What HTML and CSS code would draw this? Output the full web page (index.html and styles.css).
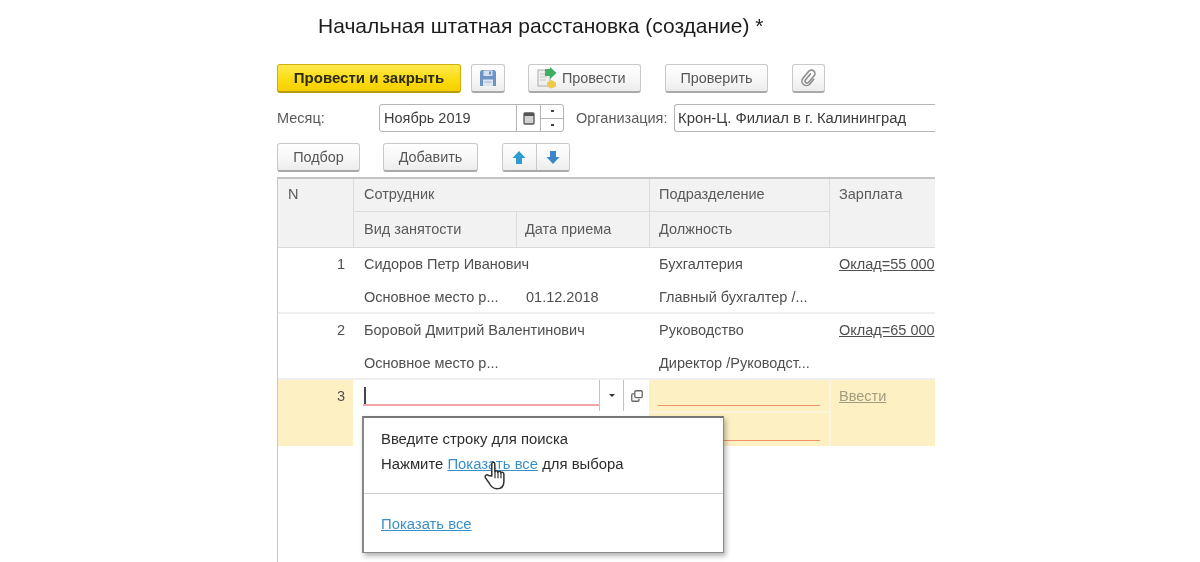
FILE: index.html
```html
<!DOCTYPE html>
<html lang="ru">
<head>
<meta charset="utf-8">
<title>Начальная штатная расстановка</title>
<link rel="stylesheet" href="styles.css">
</head>
<body>
<main class="form">
  <h1 class="title">Начальная штатная расстановка (создание) *</h1>

  <div class="bar bar-commands">
    <button class="btn btn-primary">Провести и закрыть</button>
    <button class="btn btn-save" aria-label="Записать">
      <svg width="18" height="18" viewBox="0 0 18 18"><path d="M1 2.500 2.500 1H15.500L17 2.500V17H1Z" fill="#6d94c6"/><rect x="4.500" y="1.500" width="9" height="5.500" fill="#d5e0ee"/><rect x="10" y="2.500" width="2" height="3" fill="#6d94c6"/><rect x="4" y="10.500" width="10" height="6.500" fill="#dde5f0"/><rect x="5.500" y="12.500" width="7" height="1" fill="#9db5d4"/></svg>
    </button>
    <button class="btn btn-post">
      <svg width="20" height="22" viewBox="0 0 20 22"><rect x="1" y="3" width="12" height="16" fill="#eef0ee" stroke="#a9aea9"/><path d="M3 7h7M3 10h7M3 13h6" stroke="#c2c6c2"/><path d="M8 2H13V0L19.500 6 13 12V9H8Z" fill="#3fae63"/><path d="M10 15.500 14.500 13 19 15.500V19.500L14.500 21.500 10 19.500Z" fill="#eec94c"/></svg>
      Провести
    </button>
    <button class="btn btn-check">Проверить</button>
    <button class="btn btn-clip" aria-label="Вложения">
      <svg width="18" height="18" viewBox="0 0 18 18"><path d="M7.500 5V12.500a2 2 0 0 0 4 0V4a3.500 3.500 0 0 0-7 0V13a4.500 4.500 0 0 0 9 0V7" transform="rotate(40 9 9)" fill="none" stroke="#8c8c8c" stroke-width="1.600" stroke-linecap="round"/></svg>
    </button>
  </div>

  <div class="bar bar-fields">
    <label class="field-label label-month">Месяц:</label>
    <div class="input input-month">
      <span class="input-text">Ноябрь 2019</span>
      <span class="input-cal">
        <svg width="12" height="13" viewBox="0 0 12 13"><rect x="1" y="1" width="10" height="11" rx="1" fill="#d2d2d2" stroke="#555" stroke-width="1.300"/><rect x="1" y="1" width="10" height="3" fill="#555"/></svg>
      </span>
      <span class="input-spin"><i></i><i></i></span>
    </div>
    <label class="field-label label-org">Организация:</label>
    <div class="input input-org"><span class="input-text">Крон-Ц. Филиал в г. Калининград</span></div>
  </div>

  <div class="bar bar-table">
    <button class="btn btn-pick">Подбор</button>
    <button class="btn btn-add">Добавить</button>
    <div class="btn-group">
      <button class="btn-seg" aria-label="Вверх">
        <svg width="14" height="15" viewBox="0 0 14 15"><path d="M7 1 13.500 8H10V14H4V8H.5Z" fill="#2f9bd3"/></svg>
      </button>
      <button class="btn-seg" aria-label="Вниз">
        <svg width="14" height="15" viewBox="0 0 14 15"><path d="M7 14 13.500 7H10V1H4V7H.5Z" fill="#3a86c8"/></svg>
      </button>
    </div>
  </div>

  <section class="table">
    <div class="thead">
      <div class="th th-n">N</div>
      <div class="th th-emp">Сотрудник</div>
      <div class="th th-kind">Вид занятости</div>
      <div class="th th-date">Дата приема</div>
      <div class="th th-dep">Подразделение</div>
      <div class="th th-pos">Должность</div>
      <div class="th th-sal">Зарплата</div>
    </div>

    <div class="row">
      <div class="c c-n">1</div>
      <div class="c c-emp">Сидоров Петр Иванович</div>
      <div class="c c-kind">Основное место р...</div>
      <div class="c c-date">01.12.2018</div>
      <div class="c c-dep">Бухгалтерия</div>
      <div class="c c-pos">Главный бухгалтер /...</div>
      <div class="c c-sal"><a class="sal-link">Оклад=55 000</a></div>
    </div>

    <div class="row">
      <div class="c c-n">2</div>
      <div class="c c-emp">Боровой Дмитрий Валентинович</div>
      <div class="c c-kind">Основное место р...</div>
      <div class="c c-date"></div>
      <div class="c c-dep">Руководство</div>
      <div class="c c-pos">Директор /Руководст...</div>
      <div class="c c-sal"><a class="sal-link">Оклад=65 000</a></div>
    </div>

    <div class="row row-edit">
      <div class="c c-n">3</div>
      <div class="edit-emp">
        <div class="edit-input"><span class="caret"></span></div>
        <span class="edit-drop"><i></i></span>
        <span class="edit-open">
          <svg width="12" height="12" viewBox="0 0 11 11"><rect x="3.500" y=".7" width="6.800" height="6.300" rx="1" fill="none" stroke="#666" stroke-width="1.200"/><path d="M3 3.500H1.500A.8.8 0 0 0 .7 4.300V9.500A.8.8 0 0 0 1.500 10.300H6.500A.8.8 0 0 0 7.300 9.500V8" fill="none" stroke="#666" stroke-width="1.200"/></svg>
        </span>
      </div>
      <div class="edit-dep"><span class="req"></span></div>
      <div class="edit-pos"><span class="req"></span></div>
      <div class="edit-sal"><a class="sal-link sal-muted">Ввести</a></div>
    </div>

    <aside class="popup">
      <div class="popup-msg">
        <p>Введите строку для поиска</p>
        <p>Нажмите <a class="link">Показать все</a> для выбора</p>
      </div>
      <div class="popup-foot"><a class="link">Показать все</a></div>
      <svg class="hand" width="24" height="30" viewBox="0 0 22 28"><path d="M8 15V3.500C8 1.500 10.800 1.500 10.800 3.500V11C11 9.500 13.500 9.500 13.700 11.500 14 10 16.300 10 16.500 12 17 11 19.300 11 19.300 13.500V20C19.300 24 17 26.800 12.800 26.800 8.500 26.800 7 24.500 5.500 21.500L2 16.500C1 14.500 3.500 13 5 14.500Z" fill="#fff" stroke="#333" stroke-width="1.400" stroke-linejoin="round"/><path d="M11 11V17M13.800 11.500V17M16.600 12V17" stroke="#333" stroke-width="1.100"/></svg>
    </aside>
  </section>
</main>
</body>
</html>
```

FILE: styles.css
```css
* { box-sizing: border-box; }
html, body { margin: 0; height: 562px; overflow: hidden; background: #fff; }
body {
  font-family: "Liberation Sans", Arial, sans-serif;
  font-size: 14.5px;
  color: #4f4f4f;
  filter: blur(0.45px);
}
.form {
  width: 658px;
  height: 562px;
  margin-left: 277px;
  display: flex;
  flex-direction: column;
  overflow: hidden;
}
.title {
  margin: 0;
  padding: 14px 0 0 41px;
  height: 63px;
  font-size: 21px;
  line-height: 24px;
  font-weight: 400;
  color: #1c1c1c;
  white-space: nowrap;
}
.bar { display: flex; align-items: center; flex: none; }
.bar-commands { height: 30px; }
.bar-fields { height: 28px; margin-top: 11px; }
.bar-table { height: 29px; margin-top: 11px; }

.btn {
  height: 29px;
  display: flex;
  align-items: center;
  justify-content: center;
  padding: 0;
  font: inherit;
  font-size: 14.4px;
  color: #565656;
  background: linear-gradient(#fff, #f6f6f6 60%, #ececec);
  border: 1px solid #c9c9c9;
  border-bottom: 2px solid #a9a9a9;
  border-radius: 3px;
}
.btn-primary {
  width: 184px;
  font-weight: 700;
  font-size: 15px;
  color: #2c2a10;
  background: linear-gradient(#ffe94f, #fbdc12 55%, #f6cf00);
  border-color: #cfae0c;
  border-bottom-color: #b99b10;
}
.btn-save { width: 34px; margin-left: 10px; }
.btn-post { width: 113px; margin-left: 23px; gap: 5px; justify-content: flex-start; padding-left: 8px; }
.btn-check { width: 103px; margin-left: 24px; }
.btn-clip { width: 33px; margin-left: 24px; }
.btn-pick { width: 83px; }
.btn-add { width: 95px; margin-left: 23px; }

.btn-group {
  display: flex;
  width: 68px;
  height: 29px;
  margin-left: 24px;
  border: 1px solid #c9c9c9;
  border-bottom: 2px solid #a9a9a9;
  border-radius: 3px;
  overflow: hidden;
}
.btn-seg {
  flex: 1;
  display: flex;
  align-items: center;
  justify-content: center;
  padding: 0;
  border: 0;
  background: linear-gradient(#fff, #f6f6f6 60%, #ececec);
}
.btn-seg + .btn-seg { border-left: 1px solid #c9c9c9; }

.field-label { color: #5a5a5a; }
.label-month { width: 102px; }
.label-org { margin-left: 12px; width: 98px; }
.input {
  height: 28px;
  display: flex;
  align-items: stretch;
  background: #fff;
  border: 1px solid #b5b5b5;
  border-radius: 3px;
}
.input-text { color: #3c3c3c; line-height: 26px; padding-left: 4px; white-space: nowrap; }
.input-month { width: 185px; }
.input-month .input-text { width: 136px; }
.input-cal {
  width: 24px;
  display: flex;
  align-items: center;
  justify-content: center;
  border-left: 1px solid #b5b5b5;
}
.input-spin {
  flex: 1;
  display: flex;
  flex-direction: column;
  border-left: 1px solid #b5b5b5;
}
.input-spin i {
  flex: 1;
  display: flex;
  align-items: center;
  justify-content: center;
}
.input-spin i + i { border-top: 1px solid #b5b5b5; }
.input-spin i::after { content: ""; width: 3px; height: 2px; background: #444; }
.input-org { flex: 1; border-right: 0; border-radius: 3px 0 0 3px; }
.input-org .input-text { padding-left: 3px; font-size: 14.85px; }

.table {
  position: relative;
  flex: 1;
  margin-top: 5px;
  border-left: 1px solid #c8c8c8;
  border-top: 2px solid #c4c4c4;
}
.thead, .row {
  display: grid;
  grid-template-columns: 75px 163px 133px 180px 106px;
}
.thead {
  grid-template-rows: 33px 35px;
  background: #f2f2f2;
  border-bottom: 1px solid #d8d8d8;
}
.th { padding: 7px 0 0 10px; color: #5a5a5a; border-left: 1px solid #dcdcdc; white-space: nowrap; }
.th-n { grid-row: 1 / 3; border-left: 0; }
.th-emp { grid-column: 2 / 4; grid-row: 1; border-bottom: 1px solid #dcdcdc; }
.th-kind { grid-column: 2; grid-row: 2; padding-top: 9px; }
.th-date { grid-column: 3; grid-row: 2; padding-left: 8px; padding-top: 9px; }
.th-dep { grid-column: 4; grid-row: 1; border-bottom: 1px solid #dcdcdc; padding-left: 9px; }
.th-pos { grid-column: 4; grid-row: 2; padding-left: 9px; padding-top: 9px; }
.th-sal { grid-column: 5; grid-row: 1 / 3; padding-left: 9px; }

.row {
  height: 66px;
  grid-template-rows: 33px 33px;
  border-bottom: 2px solid #efefef;
  line-height: 33px;
  white-space: nowrap;
}
.c { padding-left: 11px; overflow: hidden; }
.c-n { grid-row: 1 / 3; text-align: right; padding: 0 8px 0 0; }
.c-emp { grid-column: 2 / 4; grid-row: 1; }
.c-kind { grid-column: 2; grid-row: 2; }
.c-date { grid-column: 3; grid-row: 2; padding-left: 10px; }
.c-dep { grid-column: 4; grid-row: 1; padding-left: 10px; }
.c-pos { grid-column: 4; grid-row: 2; padding-left: 10px; }
.c-sal { grid-column: 5; grid-row: 1 / 3; padding-left: 10px; }
.sal-link { color: #4f4f4f; text-decoration: underline; }
.sal-muted { color: #a19c80; }

.row-edit { border-bottom-color: #e8e8e8; }
.row-edit .c-n { background: #fdf1c4; }
.edit-emp {
  grid-column: 2 / 4;
  grid-row: 1 / 3;
  display: grid;
  grid-template-columns: 246px 24px 26px;
  grid-template-rows: 31px;
  background: #fff;
}
.edit-input { margin: 0 0 5px 10px; border-bottom: 2px solid #f0a6a6; display: flex; align-items: flex-end; padding-left: 1px; }
.caret { width: 2px; height: 17px; background: #444; }
.edit-drop, .edit-open { display: flex; align-items: center; justify-content: center; border-left: 1px solid #c4c4c4; }
.edit-drop i { width: 0; height: 0; border: 3px solid transparent; border-top: 3px solid #333; border-bottom: 0; }
.edit-dep, .edit-pos { grid-column: 4; background: #fdf1c4; padding: 0 9px; display: flex; align-items: flex-end; }
.edit-dep { grid-row: 1; border-bottom: 2px solid #fbf4dc; }
.edit-pos { grid-row: 2; }
.req { flex: 1; border-bottom: 1px solid #ee9468; margin-bottom: 5px; }
.edit-sal { grid-column: 5; grid-row: 1 / 3; background: #fdf1c4; border-left: 2px solid #fbf4dc; padding-left: 8px; }

.popup {
  position: absolute;
  left: 84px;
  top: 237px;
  width: 362px;
  height: 137px;
  background: #fff;
  border: 1px solid #8a8a8a;
  border-top: 2px solid #777;
  border-left: 2px solid #888;
  box-shadow: 2px 3px 5px rgba(0,0,0,.3);
  color: #2d2d2d;
  font-size: 14.85px;
  display: flex;
  flex-direction: column;
}
.popup-msg { height: 76px; padding: 11px 0 0 17px; border-bottom: 1px solid #cfcfcf; }
.popup-msg p { margin: 0 0 5px; line-height: 20px; }
.popup-foot { padding: 20px 0 0 17px; line-height: 20px; }
.link { color: #3b8fc9; text-decoration: underline; }
.hand { position: absolute; left: 119px; top: 42px; }
```
